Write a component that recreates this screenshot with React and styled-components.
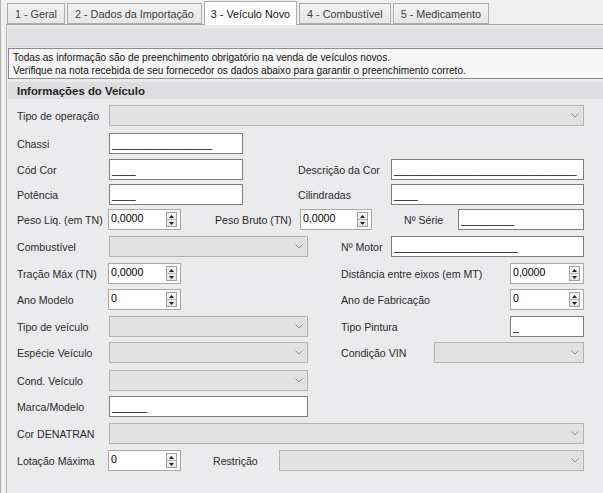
import React from "react";
import styled, { createGlobalStyle } from "styled-components";

const Global = createGlobalStyle`
  html, body { margin: 0; padding: 0; }
  body {
    background: #f0f0f0;
    font-family: "Liberation Sans", Arial, sans-serif;
    font-size: 10.6px;
    color: #1e1e1e;
  }
`;

const Frame = styled.div`
  width: 603px;
  height: 493px;
  overflow: hidden;
  box-sizing: border-box;
  background: #f0f0f0;
  border-left: 1px solid #b0b0b0;
  padding-left: 5px;
  display: flex;
  flex-direction: column;
`;

const TabBar = styled.div`
  display: flex;
  align-items: flex-end;
  height: 24px;
  padding-left: 1px;
  gap: 2px;
  position: relative;
  z-index: 1;
`;

const Tab = styled.div`
  box-sizing: border-box;
  height: ${(p) => (p.$active ? "24px" : "21px")};
  margin-bottom: ${(p) => (p.$active ? "-1px" : "0")};
  padding: 0 ${(p) => (p.$active ? "6px" : "7px")};
  display: flex;
  align-items: center;
  border: 1px solid #acacac;
  border-bottom: ${(p) => (p.$active ? "none" : "1px solid #acacac")};
  background: ${(p) =>
    p.$active ? "#ffffff" : "linear-gradient(#f3f3f3, #e6e6e6)"};
  color: ${(p) => (p.$active ? "#111" : "#3c3c3c")};
  font-size: 10.8px;
  white-space: nowrap;
`;

const Panel = styled.div`
  flex: 1;
  border-top: 1px solid #a5a5a5;
  border-left: 1px solid #b4b4b4;
  background: #ebebee;
  padding: 3px 0 0 1px;
  display: flex;
  flex-direction: column;
`;

const TopBar = styled.div`
  height: 18px;
  background: #e2e2e4;
  border-bottom: 1px solid #d6d6d8;
`;

const InfoBox = styled.div`
  margin-top: 1px;
  margin-right: -2px;
  border: 1px solid #8c8c8c;
  background: #f7f7f7;
  padding: 2px 4px 1px 4px;
  line-height: 13px;
  font-size: 10.1px;
  color: #111;
`;

const SectionHeader = styled.div`
  margin-top: 3px;
  height: 17px;
  background: #dedee0;
  display: flex;
  align-items: center;
  padding-left: 9px;
  font-weight: bold;
  font-size: 11.4px;
  color: #222;
`;

const Form = styled.div`
  display: flex;
  flex-direction: column;
  padding-left: 9px;
`;

const Row = styled.div`
  display: flex;
  align-items: center;
  height: 21px;
  margin-top: ${(p) => p.$mt}px;
`;

const Label = styled.div`
  width: ${(p) => p.$w}px;
  flex: none;
  white-space: nowrap;
  color: #2a2a2a;
`;

const Spacer = styled.div`
  width: ${(p) => p.$w}px;
  flex: none;
`;

const Input = styled.div`
  box-sizing: border-box;
  width: ${(p) => p.$w}px;
  height: ${(p) => p.$h || 21}px;
  flex: none;
  background: #fff;
  border: 1px solid #7d7d7d;
  display: flex;
  align-items: center;
  padding-left: 2px;
  color: #000;
  overflow: hidden;
  white-space: pre;
`;

const Combo = styled.div`
  box-sizing: border-box;
  width: ${(p) => p.$w}px;
  height: ${(p) => p.$h || 21}px;
  flex: none;
  background: #e2e2e2;
  border: 1px solid #b2b2b2;
  display: flex;
  align-items: center;
  justify-content: flex-end;
  padding-right: 4px;
`;

const Spin = styled.div`
  box-sizing: border-box;
  width: ${(p) => p.$w}px;
  height: 21px;
  flex: none;
  background: #fff;
  border: 1px solid #a8a8a8;
  display: flex;
  align-items: flex-start;
  justify-content: space-between;
  padding: 1px 1px 0 2px;
  color: #000;
`;

const SpinText = styled.span`
  line-height: 15px;
`;

const SpinButtons = styled.div`
  width: 11px;
  height: 15px;
  margin-top: 1px;
  margin-right: 2px;
  border: 1px solid #a0a0a0;
  box-sizing: border-box;
  background: linear-gradient(#f6f6f6, #e4e4e4);
  display: flex;
  flex-direction: column;
`;

const SpinHalf = styled.div`
  flex: 1;
  display: flex;
  align-items: center;
  justify-content: center;
  border-top: ${(p) => (p.$lower ? "1px solid #b5b5b5" : "none")};
`;

const Chevron = () => (
  <svg width="8" height="5" viewBox="0 0 8 5">
    <path d="M0.5 0.5 L4 4 L7.5 0.5" fill="none" stroke="#8a8a8a" strokeWidth="1" />
  </svg>
);

const Arrow = ({ up }) => (
  <svg width="5" height="3" viewBox="0 0 5 3">
    <path d={up ? "M0 3 L2.5 0 L5 3 Z" : "M0 0 L2.5 3 L5 0 Z"} fill="#202020" />
  </svg>
);

const SpinEdit = ({ w, value }) => (
  <Spin $w={w}>
    <SpinText>{value}</SpinText>
    <SpinButtons>
      <SpinHalf>
        <Arrow up />
      </SpinHalf>
      <SpinHalf $lower>
        <Arrow />
      </SpinHalf>
    </SpinButtons>
  </Spin>
);

const Select = ({ w }) => (
  <Combo $w={w}>
    <Chevron />
  </Combo>
);

const u = (n) => "_".repeat(n);

export default function App() {
  return (
    <>
      <Global />
      <Frame>
        <TabBar>
          <Tab>1 - Geral</Tab>
          <Tab>2 - Dados da Importação</Tab>
          <Tab $active>3 - Veículo Novo</Tab>
          <Tab>4 - Combustível</Tab>
          <Tab>5 - Medicamento</Tab>
        </TabBar>
        <Panel>
          <TopBar />
          <InfoBox>
            Todas as informação são de preenchimento obrigatório na venda de veículos novos.
            <br />
            Verifique na nota recebida de seu fornecedor os dados abaixo para garantir o preenchimento correto.
          </InfoBox>
          <SectionHeader>Informações do Veículo</SectionHeader>
          <Form>
            <Row $mt={6}>
              <Label $w={92}>Tipo de operação</Label>
              <Select w={475} />
            </Row>
            <Row $mt={7}>
              <Label $w={92}>Chassi</Label>
              <Input $w={134}>{u(17)}</Input>
            </Row>
            <Row $mt={5}>
              <Label $w={92}>Cód Cor</Label>
              <Input $w={134}>{u(4)}</Input>
              <Spacer $w={55} />
              <Label $w={93}>Descrição da Cor</Label>
              <Input $w={193}>{u(31)}</Input>
            </Row>
            <Row $mt={4}>
              <Label $w={92}>Potência</Label>
              <Input $w={134}>{u(4)}</Input>
              <Spacer $w={55} />
              <Label $w={93}>Cilindradas</Label>
              <Input $w={193}>{u(4)}</Input>
            </Row>
            <Row $mt={4}>
              <Label $w={91}>Peso Liq. (em TN)</Label>
              <SpinEdit w={73} value="0,0000" />
              <Spacer $w={34} />
              <Label $w={85}>Peso Bruto (TN)</Label>
              <SpinEdit w={72} value="0,0000" />
              <Spacer $w={32} />
              <Label $w={54}>Nº Série</Label>
              <Input $w={126}>{u(9)}</Input>
            </Row>
            <Row $mt={6}>
              <Label $w={92}>Combustível</Label>
              <Select w={199} />
              <Spacer $w={33} />
              <Label $w={50}>Nº Motor</Label>
              <Input $w={193}>{u(21)}</Input>
            </Row>
            <Row $mt={6}>
              <Label $w={91}>Tração Máx (TN)</Label>
              <SpinEdit w={73} value="0,0000" />
              <Spacer $w={160} />
              <Label $w={169}>Distância entre eixos (em MT)</Label>
              <SpinEdit w={74} value="0,0000" />
            </Row>
            <Row $mt={5}>
              <Label $w={91}>Ano Modelo</Label>
              <SpinEdit w={73} value="0" />
              <Spacer $w={160} />
              <Label $w={169}>Ano de Fabricação</Label>
              <SpinEdit w={74} value="0" />
            </Row>
            <Row $mt={6}>
              <Label $w={92}>Tipo de veículo</Label>
              <Select w={199} />
              <Spacer $w={33} />
              <Label $w={169}>Tipo Pintura</Label>
              <Input $w={74}>{u(1)}</Input>
            </Row>
            <Row $mt={5}>
              <Label $w={92}>Espécie Veículo</Label>
              <Select w={199} />
              <Spacer $w={33} />
              <Label $w={93}>Condição VIN</Label>
              <Select w={150} />
            </Row>
            <Row $mt={7}>
              <Label $w={92}>Cond. Veículo</Label>
              <Select w={199} />
            </Row>
            <Row $mt={5}>
              <Label $w={92}>Marca/Modelo</Label>
              <Input $w={199}>{u(6)}</Input>
            </Row>
            <Row $mt={6}>
              <Label $w={92}>Cor DENATRAN</Label>
              <Select w={475} />
            </Row>
            <Row $mt={6}>
              <Label $w={91}>Lotação Máxima</Label>
              <SpinEdit w={73} value="0" />
              <Spacer $w={32} />
              <Label $w={66}>Restrição</Label>
              <Select w={305} />
            </Row>
          </Form>
        </Panel>
      </Frame>
    </>
  );
}
